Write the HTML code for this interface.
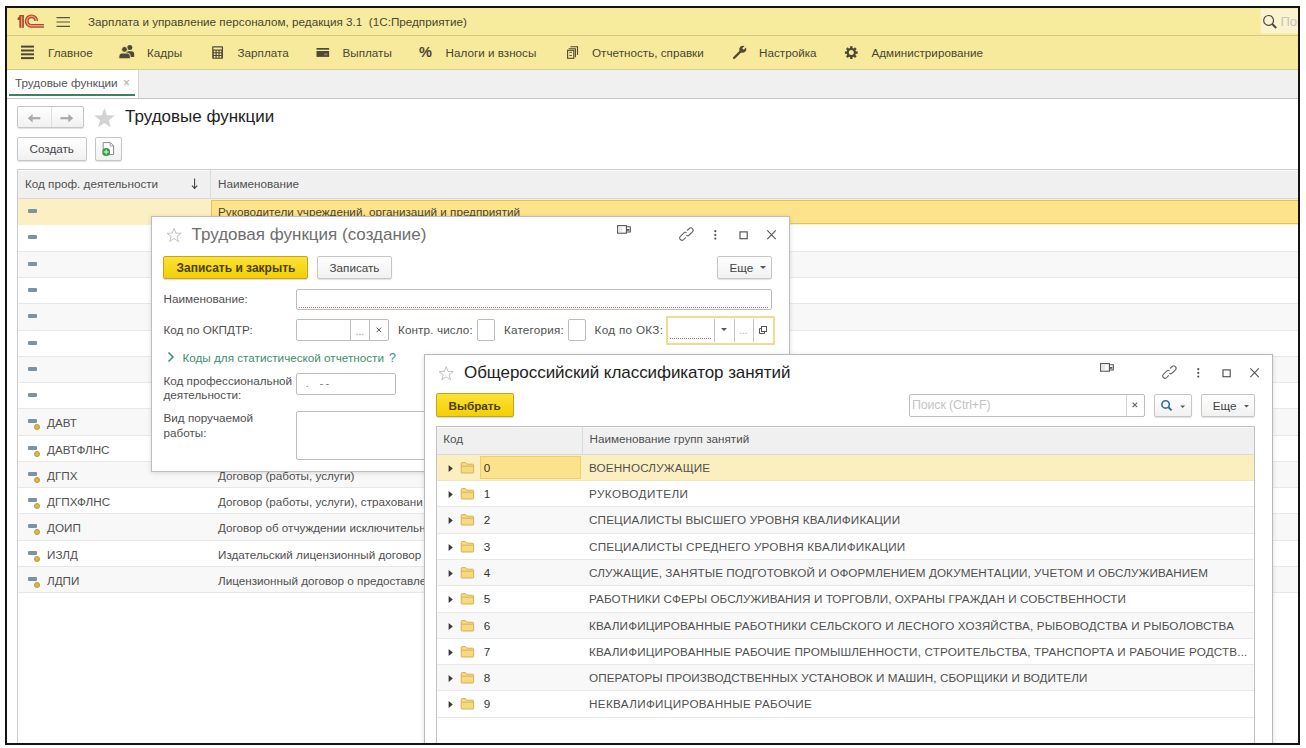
<!DOCTYPE html>
<html><head><meta charset="utf-8">
<style>
*{box-sizing:border-box;margin:0;padding:0}
html,body{width:1306px;height:748px;overflow:hidden;background:#fff}
body{position:relative;font-family:"Liberation Sans",sans-serif;font-size:11.7px;color:#505050}
.a{position:absolute}
.t{position:absolute;white-space:nowrap;line-height:14px}
#app{position:absolute;left:0;top:0;width:1306px;height:748px;clip-path:inset(8px 8px 5px 7px);background:#fff}
#frame{position:absolute;left:5px;top:6px;width:1295px;height:739px;border:2px solid #141414}
.ttl{color:#4a4536}
.btn{position:absolute;border:1px solid #c6c6c6;border-radius:2px;background:linear-gradient(#fff,#f1f1f1);box-shadow:0 1px 1px rgba(0,0,0,.12)}
.ybtn{position:absolute;border:1px solid #c4a51c;border-radius:2px;background:linear-gradient(#fbe236,#f3cf08);box-shadow:0 1px 1px rgba(0,0,0,.15)}
.inp{position:absolute;border:1px solid #bdbdbd;border-radius:2px;background:#fff}
.row{position:absolute;height:27px;border-bottom:1px solid #e4e4e4}
.g{background:#f6f6f6}
</style></head><body>
<div id="app">
  <!-- top title bar -->
  <div class="a" style="left:0;top:0;width:1306px;height:35px;background:#f7eb9d"></div>
  <div class="a" style="left:0;top:35px;width:1306px;height:1px;background:#d8c87e"></div>
  <div class="a" style="left:0;top:36px;width:1306px;height:33px;background:#f7ea9c"></div>
  <div class="a" style="left:0;top:68.5px;width:1306px;height:1px;background:#d9cb8c"></div>
  <!-- search top right -->
  <div class="a" style="left:1261px;top:9px;width:45px;height:24px;background:#fbf3d0;box-shadow:0 0 2px #fbf3d0"></div>

  <!-- logo -->
  <svg class="a" style="left:0;top:0" width="80" height="35" viewBox="0 0 80 35">
    <g fill="none" stroke-linecap="butt">
      <path d="M36.2 21.1 A4.75 4.75 0 1 0 31.4 25.85 L44 25.85" stroke="#ad4a2a" stroke-width="3.9"/>
      <path d="M36.2 21.1 A4.75 4.75 0 1 0 31.4 25.85 L44 25.85" stroke="#f09a78" stroke-width="1.5"/>
      <path d="M19.3 15 H23.9 V27.8 H19.3 V19.9 H17.6 V18.1 L19.3 16.6Z" fill="#ad4a2a" stroke="none"/>
      <path d="M21.6 27.8 V16.2" stroke="#f09a78" stroke-width="1.3"/>
    </g>
    <g stroke="#5b5440" stroke-width="1.2"><path d="M56.5 17.6H70M56.5 22H70M56.5 26.4H70"/></g>
  </svg>
  <div class="t ttl" style="left:88px;top:14.5px">Зарплата и управление персоналом, редакция 3.1&nbsp; (1С:Предприятие)</div>
  <svg class="a" style="left:1262px;top:14px" width="16" height="16" viewBox="0 0 16 16"><circle cx="6.6" cy="6.4" r="4.9" fill="none" stroke="#444" stroke-width="1.15"/><path d="M10.1 9.9 L14.2 14" stroke="#444" stroke-width="2"/></svg>
  <div class="t" style="left:1280.5px;top:13.5px;color:#c4c4c4;font-size:13px;line-height:15px">Пои</div>
  <!-- nav -->
  <svg class="a" style="left:0;top:36px" width="1000" height="33" viewBox="0 36 1000 33">
    <g fill="#4f4832">
      <rect x="21" y="45.6" width="13" height="2"/><rect x="21" y="49.5" width="13" height="2"/><rect x="21" y="53.3" width="13" height="2"/><rect x="21" y="57.1" width="13" height="2"/>
      <!-- people -->
      <circle cx="129.8" cy="47.4" r="2.5"/><path d="M126 57 V53.6 Q126 51.4 128.2 51.2 H131.6 Q134.2 51.4 134.2 54 V57 Z"/>
      <circle cx="124.5" cy="49.4" r="2.9" stroke="#f7ea9c" stroke-width="0.9"/><path d="M118.9 58.8 V56.2 Q118.9 53.3 121.6 53.1 H127.5 Q130.3 53.3 130.3 56.2 V58.8 Z" stroke="#f7ea9c" stroke-width="0.9"/>
      <!-- calculator -->
      <rect x="212.2" y="46.2" width="10.8" height="12.6" rx="0.8"/>
      <!-- card -->
      <rect x="316.5" y="48" width="12.6" height="1.7"/><rect x="316.5" y="51" width="12.6" height="5.9"/>
      <!-- wrench -->
      <path d="M733.4 56.9 L739.4 50.9 Q738.6 48.2 740.5 46.6 Q742.4 45.2 744.6 45.9 L742.2 48.3 L743.6 49.8 L746.1 47.4 Q746.8 49.6 745.4 51.4 Q743.6 53.2 741.1 52.5 L735.1 58.6 Q734.2 59.5 733.3 58.7 Q732.5 57.8 733.4 56.9Z"/>
    </g>
    <g fill="#f9eaa0">
      <rect x="213.4" y="47.5" width="8.4" height="2"/>
      <rect x="213.8" y="50.6" width="1.7" height="1.7"/><rect x="216.7" y="50.6" width="1.7" height="1.7"/><rect x="219.6" y="50.6" width="1.7" height="1.7"/>
      <rect x="213.8" y="53.3" width="1.7" height="1.7"/><rect x="216.7" y="53.3" width="1.7" height="1.7"/><rect x="219.6" y="53.3" width="1.7" height="1.7"/>
      <rect x="213.8" y="56" width="1.7" height="1.7"/><rect x="216.7" y="56" width="1.7" height="1.7"/><rect x="219.6" y="56" width="1.7" height="1.7"/>
      <rect x="324" y="53.5" width="3.5" height="1.8" fill="#8a8060"/>
    </g>
    <!-- reports -->
    <g fill="none" stroke="#4f4832" stroke-width="1.1">
      <rect x="567.6" y="50.3" width="6.2" height="8"/>
      <path d="M568.6 48.7 H575.4 V57.3 M570.4 46.8 H577.5 V55"/>
      <path d="M569.3 52.3 H572 M569.3 55.4 H572" stroke-width="0.9"/>
    </g>
    <!-- gear -->
    <g transform="translate(851.3 52.6)">
      <g fill="#4f4832">
        <circle r="4.7"/>
        <rect x="-1.2" y="-6.4" width="2.4" height="12.8"/>
        <rect x="-1.2" y="-6.4" width="2.4" height="12.8" transform="rotate(45)"/>
        <rect x="-1.2" y="-6.4" width="2.4" height="12.8" transform="rotate(90)"/>
        <rect x="-1.2" y="-6.4" width="2.4" height="12.8" transform="rotate(135)"/>
      </g>
      <circle r="2.5" fill="#f7ea9c"/>
    </g>
  </svg>
  <div class="t ttl" style="left:48px;top:46px">Главное</div>
  <div class="t ttl" style="left:147px;top:46px">Кадры</div>
  <div class="t ttl" style="left:237.5px;top:46px">Зарплата</div>
  <div class="t ttl" style="left:342.5px;top:46px">Выплаты</div>
  <div class="t ttl" style="left:419px;top:44px;font-weight:bold;font-size:14.5px;line-height:16px">%</div>
  <div class="t ttl" style="left:445.5px;top:46px">Налоги и взносы</div>
  <div class="t ttl" style="left:592px;top:46px">Отчетность, справки</div>
  <div class="t ttl" style="left:759px;top:46px">Настройка</div>
  <div class="t ttl" style="left:871.5px;top:46px">Администрирование</div>
  <!-- tabs strip -->
  <div class="a" style="left:0;top:69.5px;width:1306px;height:29.5px;background:#f0f0f0;border-bottom:1px solid #c4c4c4"></div>
  <div class="a" style="left:0;top:69.5px;width:138.5px;height:28.5px;background:#fff;border-right:1px solid #d4d4d4"></div>
  <div class="a" style="left:9px;top:94px;width:126px;height:2px;background:#3f7f62"></div>
  <div class="t" style="left:15px;top:76px;color:#555">Трудовые функции</div>
  <div class="t" style="left:123px;top:76px;color:#aaa;font-size:12px">×</div>

  <!-- page header -->
  <div class="btn" style="left:17px;top:106px;width:67px;height:22px"></div>
  <div class="a" style="left:50.5px;top:107px;width:1px;height:20px;background:#dedede"></div>
  <svg class="a" style="left:0;top:100px" width="130" height="30" viewBox="0 100 130 30">
    <g fill="none" stroke="#a9a9a9" stroke-width="2.2"><path d="M40.3 118.2 H30"/><path d="M60.4 118.2 H70.5"/></g>
    <g fill="#a9a9a9"><path d="M27.8 118.2 L32.6 114 V122.4Z"/><path d="M73.2 118.2 L68.4 114 V122.4Z"/></g>
    <path d="M104.4 108 L107 115.2 L114.8 115.4 L108.7 120.2 L110.9 127.2 L104.4 123 L97.9 127.2 L100.1 120.2 L94 115.4 L101.8 115.2Z" fill="#d3d3d3"/>
  </svg>
  <div class="t" style="left:125px;top:107px;font-size:17px;line-height:20px;color:#222">Трудовые функции</div>
  <div class="btn" style="left:17px;top:137px;width:69.5px;height:23.5px"></div>
  <div class="t" style="left:29.5px;top:141.5px;color:#444">Создать</div>
  <div class="btn" style="left:95px;top:137px;width:27px;height:23.5px"></div>
  <svg class="a" style="left:95px;top:137px" width="27" height="24" viewBox="95 137 27 24">
    <path d="M103.2 142.6 H110.4 L113.6 145.8 V154.6 H103.2Z" fill="#fff" stroke="#8a8a8a" stroke-width="1"/>
    <path d="M110.2 142.6 V146 H113.6" fill="none" stroke="#8a8a8a" stroke-width="0.8"/>
    <circle cx="106.2" cy="152" r="3.9" fill="#3b944c"/>
    <rect x="105.5" y="149.6" width="1.4" height="4.8" fill="#b8f0bc"/><rect x="103.8" y="151.3" width="4.8" height="1.4" fill="#b8f0bc"/>
  </svg>
  <!-- main table -->
  <div class="a" style="left:17px;top:169px;width:1290px;height:580px;border:1px solid #cccccc;background:#fff"></div>
  <div class="a" style="left:18px;top:170px;width:1290px;height:28px;background:#f0f0f0;border-top:1px solid #fafafa"></div>
  <div class="a" style="left:18px;top:198px;width:1290px;height:1px;background:#d8d8d8"></div>
  <div class="a" style="left:210px;top:170px;width:1px;height:28px;background:#dadada"></div>
  <div class="t" style="left:25px;top:176.6px">Код проф. деятельности</div>
  <svg class="a" style="left:189px;top:175.5px" width="12" height="14" viewBox="0 0 12 14"><path d="M5.6 2.4 V12.2" stroke="#444" stroke-width="1.1"/><path d="M3 9.6 L5.6 12.4 L8.2 9.6" fill="none" stroke="#444" stroke-width="1.1"/></svg>
  <div class="t" style="left:218px;top:176.6px">Наименование</div>
  <div class="a" style="left:18px;top:199px;width:1290px;height:26px;background:#fcefc4"></div>
  <div class="a" style="left:210.5px;top:200px;width:1090px;height:23.5px;background:#fce38c;border:1px solid #e0c55a"></div>
  <div class="t" style="left:218px;top:205px;color:#4a4536">Руководители учреждений, организаций и предприятий</div>
  <div class="a" style="left:28px;top:209.2px;width:9px;height:3.5px;background:#7d93a3;border-radius:1px"></div>
  <div class="a" style="left:18px;top:225px;width:1290px;height:26px;background:#fff"></div>
  <div class="a" style="left:18px;top:251px;width:1290px;height:1px;background:#e8e8e8"></div>
  <div class="a" style="left:28px;top:235.2px;width:9px;height:3.5px;background:#7d93a3;border-radius:1px"></div>
  <div class="a" style="left:18px;top:252px;width:1290px;height:25px;background:#f8f8f8"></div>
  <div class="a" style="left:18px;top:277px;width:1290px;height:1px;background:#e8e8e8"></div>
  <div class="a" style="left:28px;top:262.2px;width:9px;height:3.5px;background:#7d93a3;border-radius:1px"></div>
  <div class="a" style="left:18px;top:278px;width:1290px;height:25px;background:#fff"></div>
  <div class="a" style="left:18px;top:303px;width:1290px;height:1px;background:#e8e8e8"></div>
  <div class="a" style="left:28px;top:288.2px;width:9px;height:3.5px;background:#7d93a3;border-radius:1px"></div>
  <div class="a" style="left:18px;top:304px;width:1290px;height:26px;background:#f8f8f8"></div>
  <div class="a" style="left:18px;top:330px;width:1290px;height:1px;background:#e8e8e8"></div>
  <div class="a" style="left:28px;top:314.2px;width:9px;height:3.5px;background:#7d93a3;border-radius:1px"></div>
  <div class="a" style="left:18px;top:331px;width:1290px;height:25px;background:#fff"></div>
  <div class="a" style="left:18px;top:356px;width:1290px;height:1px;background:#e8e8e8"></div>
  <div class="a" style="left:28px;top:341.2px;width:9px;height:3.5px;background:#7d93a3;border-radius:1px"></div>
  <div class="a" style="left:18px;top:357px;width:1290px;height:25px;background:#f8f8f8"></div>
  <div class="a" style="left:18px;top:382px;width:1290px;height:1px;background:#e8e8e8"></div>
  <div class="a" style="left:28px;top:367.2px;width:9px;height:3.5px;background:#7d93a3;border-radius:1px"></div>
  <div class="a" style="left:18px;top:383px;width:1290px;height:25px;background:#fff"></div>
  <div class="a" style="left:18px;top:408px;width:1290px;height:1px;background:#e8e8e8"></div>
  <div class="a" style="left:28px;top:393.2px;width:9px;height:3.5px;background:#7d93a3;border-radius:1px"></div>
  <div class="a" style="left:18px;top:409px;width:1290px;height:26px;background:#f8f8f8"></div>
  <div class="a" style="left:18px;top:435px;width:1290px;height:1px;background:#e8e8e8"></div>
  <div class="a" style="left:27.7px;top:419.0px;width:9px;height:3.5px;background:#7d93a3;border-radius:1px"></div>
  <div class="a" style="left:34px;top:424.0px;width:6px;height:6px;background:#d8b94a;border-radius:50%;border:1px solid #b89a36"></div>
  <div class="t" style="left:47px;top:416px">ДАВТ</div>
  <div class="a" style="left:18px;top:436px;width:1290px;height:25px;background:#fff"></div>
  <div class="a" style="left:18px;top:461px;width:1290px;height:1px;background:#e8e8e8"></div>
  <div class="a" style="left:27.7px;top:446.0px;width:9px;height:3.5px;background:#7d93a3;border-radius:1px"></div>
  <div class="a" style="left:34px;top:451.0px;width:6px;height:6px;background:#d8b94a;border-radius:50%;border:1px solid #b89a36"></div>
  <div class="t" style="left:47px;top:443px">ДАВТФЛНС</div>
  <div class="a" style="left:18px;top:462px;width:1290px;height:25px;background:#f8f8f8"></div>
  <div class="a" style="left:18px;top:487px;width:1290px;height:1px;background:#e8e8e8"></div>
  <div class="a" style="left:27.7px;top:472.0px;width:9px;height:3.5px;background:#7d93a3;border-radius:1px"></div>
  <div class="a" style="left:34px;top:477.0px;width:6px;height:6px;background:#d8b94a;border-radius:50%;border:1px solid #b89a36"></div>
  <div class="t" style="left:47px;top:469px">ДГПХ</div>
  <div class="t" style="left:218px;top:469px">Договор (работы, услуги)</div>
  <div class="a" style="left:18px;top:488px;width:1290px;height:25px;background:#fff"></div>
  <div class="a" style="left:18px;top:513px;width:1290px;height:1px;background:#e8e8e8"></div>
  <div class="a" style="left:27.7px;top:498.0px;width:9px;height:3.5px;background:#7d93a3;border-radius:1px"></div>
  <div class="a" style="left:34px;top:503.0px;width:6px;height:6px;background:#d8b94a;border-radius:50%;border:1px solid #b89a36"></div>
  <div class="t" style="left:47px;top:495px">ДГПХФЛНС</div>
  <div class="t" style="left:218px;top:495px">Договор (работы, услуги), страховани</div>
  <div class="a" style="left:18px;top:514px;width:1290px;height:26px;background:#f8f8f8"></div>
  <div class="a" style="left:18px;top:540px;width:1290px;height:1px;background:#e8e8e8"></div>
  <div class="a" style="left:27.7px;top:524.0px;width:9px;height:3.5px;background:#7d93a3;border-radius:1px"></div>
  <div class="a" style="left:34px;top:529.0px;width:6px;height:6px;background:#d8b94a;border-radius:50%;border:1px solid #b89a36"></div>
  <div class="t" style="left:47px;top:521px">ДОИП</div>
  <div class="t" style="left:218px;top:521px">Договор об отчуждении исключительн</div>
  <div class="a" style="left:18px;top:541px;width:1290px;height:25px;background:#fff"></div>
  <div class="a" style="left:18px;top:566px;width:1290px;height:1px;background:#e8e8e8"></div>
  <div class="a" style="left:27.7px;top:551.0px;width:9px;height:3.5px;background:#7d93a3;border-radius:1px"></div>
  <div class="a" style="left:34px;top:556.0px;width:6px;height:6px;background:#d8b94a;border-radius:50%;border:1px solid #b89a36"></div>
  <div class="t" style="left:47px;top:548px">ИЗЛД</div>
  <div class="t" style="left:218px;top:548px">Издательский лицензионный договор о</div>
  <div class="a" style="left:18px;top:567px;width:1290px;height:25px;background:#f8f8f8"></div>
  <div class="a" style="left:18px;top:592px;width:1290px;height:1px;background:#e8e8e8"></div>
  <div class="a" style="left:27.7px;top:577.0px;width:9px;height:3.5px;background:#7d93a3;border-radius:1px"></div>
  <div class="a" style="left:34px;top:582.0px;width:6px;height:6px;background:#d8b94a;border-radius:50%;border:1px solid #b89a36"></div>
  <div class="t" style="left:47px;top:574px">ЛДПИ</div>
  <div class="t" style="left:218px;top:574px">Лицензионный договор о предоставле</div>

  <!-- dialog 1 -->
  <div class="a" style="left:151px;top:215.5px;width:639px;height:256px;background:#fff;border:1px solid #bdbdbd;box-shadow:0 1px 5px rgba(0,0,0,.13)"></div>
  <svg class="a" style="left:160px;top:220px" width="630" height="30" viewBox="160 220 630 30">
    <path d="M174.1 228.3 L175.9 233.1 L181.2 233.3 L177 236.5 L178.5 241.4 L174.1 238.6 L169.7 241.4 L171.2 236.5 L167 233.3 L172.3 233.1Z" fill="none" stroke="#c2c2c2" stroke-width="1"/>
    <g fill="none" stroke="#555" stroke-width="1.1">
      <rect x="617.6" y="225.6" width="8.8" height="7.6"/>
      <path d="M626.4 226.8 H630.3 V232 H626.4"/>
    </g>
    <rect x="626.8" y="229" width="2.6" height="1.8" fill="#555"/>
    <rect x="618.6" y="226.6" width="3.5" height="5.6" fill="#e6e6e6"/>
    <g fill="none" stroke="#666" stroke-width="1.1">
      <path d="M687.2 230.5 L689.2 228.5 Q690.8 227 692.4 228.6 Q694 230.2 692.4 231.8 L689.2 235 Q687.6 236.5 686.2 235.2"/>
      <path d="M685.8 237.4 L683.6 239.6 Q682 241.1 680.4 239.5 Q678.8 237.9 680.4 236.3 L683.6 233.1 Q685.2 231.6 686.6 232.9"/>
    </g>
    <g fill="#555"><circle cx="715.3" cy="231.2" r="1.1"/><circle cx="715.3" cy="234.9" r="1.1"/><circle cx="715.3" cy="238.6" r="1.1"/></g>
    <rect x="740" y="231.9" width="7.2" height="6.8" fill="none" stroke="#505050" stroke-width="1.15"/>
    <path d="M767.3 230.4 L775.8 239.1 M775.8 230.4 L767.3 239.1" stroke="#555" stroke-width="1.1"/>
  </svg>
  <div class="t" style="left:191.5px;top:224.5px;font-size:17px;line-height:20px;color:#6e6e6e">Трудовая функция (создание)</div>
  <div class="ybtn" style="left:163px;top:255.5px;width:145px;height:23.5px"></div>
  <div class="t" style="left:176.5px;top:260.5px;font-weight:bold;font-size:12px;color:#4b4000">Записать и закрыть</div>
  <div class="btn" style="left:316.5px;top:255.5px;width:75px;height:23.5px"></div>
  <div class="t" style="left:329.5px;top:260.5px;color:#444">Записать</div>
  <div class="btn" style="left:717px;top:255.5px;width:54.5px;height:23.5px"></div>
  <div class="t" style="left:729.5px;top:260.5px;color:#444">Еще</div>
  <svg class="a" style="left:759px;top:265px" width="8" height="5"><path d="M1 1 H7 L4 4Z" fill="#555"/></svg>
  <div class="t" style="left:163.5px;top:292.4px">Наименование:</div>
  <div class="inp" style="left:296px;top:288.5px;width:475.5px;height:21.5px"></div>
  <div class="a" style="left:299px;top:306.5px;width:470px;height:1px;background:repeating-linear-gradient(90deg,#c46a6a 0 1px,transparent 1px 2px)"></div>
  <div class="t" style="left:163.5px;top:323.2px">Код по ОКПДТР:</div>
  <div class="inp" style="left:296px;top:319.2px;width:92.5px;height:22px"></div>
  <div class="a" style="left:350px;top:320px;width:1px;height:20.5px;background:#bdbdbd"></div>
  <div class="a" style="left:369px;top:320px;width:1px;height:20.5px;background:#bdbdbd"></div>
  <div class="t" style="left:355.5px;top:324px;color:#999;font-size:10.5px">...</div>
  <svg class="a" style="left:375.5px;top:326.5px" width="6" height="6"><path d="M0.6 0.6 L5.2 5.2 M5.2 0.6 L0.6 5.2" stroke="#5a5a5a" stroke-width="1"/></svg>
  <div class="t" style="left:398px;top:323.2px;letter-spacing:0.12px">Контр. число:</div>
  <div class="inp" style="left:476.5px;top:319.2px;width:18.5px;height:22px"></div>
  <div class="t" style="left:504px;top:323.2px;letter-spacing:0.2px">Категория:</div>
  <div class="inp" style="left:567.5px;top:319.2px;width:18px;height:22px"></div>
  <div class="t" style="left:594.5px;top:323.2px;letter-spacing:0.32px">Код по ОКЗ:</div>
  <div class="a" style="left:665.5px;top:316px;width:109px;height:28.5px;border:2px solid #ebde8e;border-radius:1px;background:#fff"></div>
  <div class="a" style="left:670px;top:338px;width:41px;height:1px;background:repeating-linear-gradient(90deg,#c46a6a 0 1px,transparent 1px 2px)"></div>
  <div class="a" style="left:714px;top:319px;width:1px;height:22.5px;background:#c4c4c4"></div>
  <div class="a" style="left:733.5px;top:319px;width:1px;height:22.5px;background:#c4c4c4"></div>
  <div class="a" style="left:753px;top:319px;width:1px;height:22.5px;background:#c4c4c4"></div>
  <svg class="a" style="left:720px;top:327px" width="8" height="5"><path d="M1 1 H7 L4 4Z" fill="#555"/></svg>
  <div class="t" style="left:739px;top:324px;color:#b0b0b0;font-size:10px">...</div>
  <svg class="a" style="left:757px;top:324px" width="12" height="12" viewBox="0 0 12 12"><g fill="none" stroke="#555" stroke-width="1"><rect x="4.5" y="2.5" width="5" height="5"/><path d="M4.5 4.5 H2.5 V9.5 H7.5 V7.5"/></g></svg>
  <svg class="a" style="left:165px;top:350px" width="12" height="14"><path d="M3.5 2.5 L8 7 L3.5 11.5" fill="none" stroke="#3d9170" stroke-width="1.5"/></svg>
  <div class="t" style="left:182.5px;top:350.8px;color:#3f8f72">Коды для статистической отчетности</div>
  <div class="t" style="left:389px;top:350.8px;color:#3a8aa0;font-size:12.5px">?</div>
  <div class="t" style="left:163.5px;top:373.8px;line-height:14.5px">Код профессиональной<br>деятельности:</div>
  <div class="inp" style="left:296px;top:373.2px;width:99.5px;height:22px"></div>
  <div class="t" style="left:303px;top:377px;color:#777;font-size:10px">&nbsp;.&nbsp;&nbsp;&nbsp;&nbsp;- -</div>
  <div class="t" style="left:163.5px;top:411px;line-height:14.5px">Вид поручаемой<br>работы:</div>
  <div class="inp" style="left:296px;top:410.8px;width:600px;height:49px"></div>

  <!-- dialog 2 -->
  <div class="a" style="left:424px;top:353.5px;width:849px;height:420px;background:#fff;border:1px solid #b9b9b9;box-shadow:0 1px 5px rgba(0,0,0,.13)"></div>
  <svg class="a" style="left:430px;top:358px" width="40" height="30" viewBox="430 358 40 30">
    <path d="M446.2 366.5 L448 371.4 L453.4 371.6 L449.1 374.8 L450.6 379.8 L446.2 376.9 L441.8 379.8 L443.3 374.8 L439 371.6 L444.4 371.4Z" fill="none" stroke="#c2c2c2" stroke-width="1"/>
  </svg>
  <svg class="a" style="left:1090px;top:358px" width="180" height="30" viewBox="607 220 180 30">
    <g fill="none" stroke="#555" stroke-width="1.1">
      <rect x="617.6" y="225.6" width="8.8" height="7.6"/>
      <path d="M626.4 226.8 H630.3 V232 H626.4"/>
    </g>
    <rect x="626.8" y="229" width="2.6" height="1.8" fill="#555"/>
    <rect x="618.6" y="226.6" width="3.5" height="5.6" fill="#e6e6e6"/>
    <g fill="none" stroke="#666" stroke-width="1.1">
      <path d="M687.2 230.5 L689.2 228.5 Q690.8 227 692.4 228.6 Q694 230.2 692.4 231.8 L689.2 235 Q687.6 236.5 686.2 235.2"/>
      <path d="M685.8 237.4 L683.6 239.6 Q682 241.1 680.4 239.5 Q678.8 237.9 680.4 236.3 L683.6 233.1 Q685.2 231.6 686.6 232.9"/>
    </g>
    <g fill="#555"><circle cx="715.3" cy="231.2" r="1.1"/><circle cx="715.3" cy="234.9" r="1.1"/><circle cx="715.3" cy="238.6" r="1.1"/></g>
    <rect x="740" y="231.9" width="7.2" height="6.8" fill="none" stroke="#505050" stroke-width="1.15"/>
    <path d="M767.3 230.4 L775.8 239.1 M775.8 230.4 L767.3 239.1" stroke="#555" stroke-width="1.1"/>
  </svg>
  <div class="t" style="left:464px;top:363.1px;font-size:17px;line-height:20px;color:#222;letter-spacing:-0.06px">Общероссийский классификатор занятий</div>
  <div class="ybtn" style="left:435.5px;top:393px;width:78px;height:23.5px"></div>
  <div class="t" style="left:448.5px;top:398.5px;font-weight:bold;font-size:11.7px;color:#4b4000">Выбрать</div>
  <div class="inp" style="left:909px;top:394.3px;width:235.5px;height:22.3px"></div>
  <div class="a" style="left:1126px;top:395.3px;width:1px;height:20.5px;background:#d6d6d6"></div>
  <div class="t" style="left:912px;top:397.8px;color:#c4c4c4;font-size:12.4px;letter-spacing:-0.12px">Поиск (Ctrl+F)</div>
  <svg class="a" style="left:1132px;top:402px" width="6" height="6"><path d="M0.6 0.6 L5.2 5.2 M5.2 0.6 L0.6 5.2" stroke="#666" stroke-width="1.1"/></svg>
  <div class="btn" style="left:1154px;top:394px;width:37.6px;height:23px"></div>
  <svg class="a" style="left:1160px;top:399px" width="28" height="13" viewBox="0 0 28 13"><circle cx="5.6" cy="5.4" r="3.7" fill="none" stroke="#2f6f92" stroke-width="1.6"/><path d="M8.2 8 L11.6 11.4" stroke="#2f6f92" stroke-width="2"/><path d="M20.3 6.6 H25.1 L22.7 9Z" fill="#555"/></svg>
  <div class="btn" style="left:1200.7px;top:394px;width:54px;height:23px"></div>
  <div class="t" style="left:1212.7px;top:398.5px;color:#444">Еще</div>
  <svg class="a" style="left:1243px;top:404px" width="8" height="5"><path d="M1 1 H6 L3.5 3.5Z" fill="#555"/></svg>
  <!-- d2 table -->
  <div class="a" style="left:436px;top:426px;width:819px;height:330px;border:1px solid #c2c2c2;background:#fff"></div>
  <div class="a" style="left:437px;top:427px;width:817px;height:27px;background:#f0f0f0;border-top:1px solid #fafafa"></div>
  <div class="a" style="left:437px;top:454px;width:817px;height:1px;background:#d8d8d8"></div>
  <div class="a" style="left:582px;top:427px;width:1px;height:27px;background:#dadada"></div>
  <div class="t" style="left:443.3px;top:432px">Код</div>
  <div class="t" style="left:589.5px;top:432px">Наименование групп занятий</div>
  <div class="a" style="left:437px;top:455px;width:817px;height:25px;background:#fbefc0"></div>
  <div class="a" style="left:437px;top:480px;width:817px;height:1px;background:#efe6c8"></div>
  <div class="a" style="left:480.3px;top:456px;width:100.6px;height:23px;background:#fde28e;border:1px solid #efd067"></div>
  <svg class="a" style="left:440px;top:453.8px" width="40" height="27" viewBox="0 0 40 27"><path d="M8.6 10.9 L12.8 14.4 L8.6 17.9Z" fill="#3a3a3a"/><path d="M21.2 9.6 Q21.2 8.6 22.2 8.6 H25.2 Q26 8.6 26.6 9.6 L27 10.2 H32.6 Q33.6 10.2 33.6 11.2 V18.4 Q33.6 19 33 19 H21.8 Q21.2 19 21.2 18.4Z" fill="#f6da82" stroke="#d4b155" stroke-width="1"/><path d="M21.4 12.2 H33.4" stroke="#d4b155" stroke-width="0.9"/></svg>
  <div class="t" style="left:483.8px;top:460.7px;color:#333">0</div>
  <div class="t" style="left:589px;top:460.7px;letter-spacing:0.15px">ВОЕННОСЛУЖАЩИЕ</div>
  <div class="a" style="left:437px;top:481px;width:817px;height:25px;background:#fff"></div>
  <div class="a" style="left:437px;top:506px;width:817px;height:1px;background:#e8e8e8"></div>
  <svg class="a" style="left:440px;top:479.8px" width="40" height="27" viewBox="0 0 40 27"><path d="M8.6 10.9 L12.8 14.4 L8.6 17.9Z" fill="#3a3a3a"/><path d="M21.2 9.6 Q21.2 8.6 22.2 8.6 H25.2 Q26 8.6 26.6 9.6 L27 10.2 H32.6 Q33.6 10.2 33.6 11.2 V18.4 Q33.6 19 33 19 H21.8 Q21.2 19 21.2 18.4Z" fill="#f6da82" stroke="#d4b155" stroke-width="1"/><path d="M21.4 12.2 H33.4" stroke="#d4b155" stroke-width="0.9"/></svg>
  <div class="t" style="left:483.8px;top:486.7px;color:#333">1</div>
  <div class="t" style="left:589px;top:486.7px;letter-spacing:0.43px">РУКОВОДИТЕЛИ</div>
  <div class="a" style="left:437px;top:507px;width:817px;height:26px;background:#f8f8f8"></div>
  <div class="a" style="left:437px;top:533px;width:817px;height:1px;background:#e8e8e8"></div>
  <svg class="a" style="left:440px;top:505.8px" width="40" height="27" viewBox="0 0 40 27"><path d="M8.6 10.9 L12.8 14.4 L8.6 17.9Z" fill="#3a3a3a"/><path d="M21.2 9.6 Q21.2 8.6 22.2 8.6 H25.2 Q26 8.6 26.6 9.6 L27 10.2 H32.6 Q33.6 10.2 33.6 11.2 V18.4 Q33.6 19 33 19 H21.8 Q21.2 19 21.2 18.4Z" fill="#f6da82" stroke="#d4b155" stroke-width="1"/><path d="M21.4 12.2 H33.4" stroke="#d4b155" stroke-width="0.9"/></svg>
  <div class="t" style="left:483.8px;top:512.7px;color:#333">2</div>
  <div class="t" style="left:589px;top:512.7px;letter-spacing:0.15px">СПЕЦИАЛИСТЫ ВЫСШЕГО УРОВНЯ КВАЛИФИКАЦИИ</div>
  <div class="a" style="left:437px;top:534px;width:817px;height:25px;background:#fff"></div>
  <div class="a" style="left:437px;top:559px;width:817px;height:1px;background:#e8e8e8"></div>
  <svg class="a" style="left:440px;top:532.8px" width="40" height="27" viewBox="0 0 40 27"><path d="M8.6 10.9 L12.8 14.4 L8.6 17.9Z" fill="#3a3a3a"/><path d="M21.2 9.6 Q21.2 8.6 22.2 8.6 H25.2 Q26 8.6 26.6 9.6 L27 10.2 H32.6 Q33.6 10.2 33.6 11.2 V18.4 Q33.6 19 33 19 H21.8 Q21.2 19 21.2 18.4Z" fill="#f6da82" stroke="#d4b155" stroke-width="1"/><path d="M21.4 12.2 H33.4" stroke="#d4b155" stroke-width="0.9"/></svg>
  <div class="t" style="left:483.8px;top:539.7px;color:#333">3</div>
  <div class="t" style="left:589px;top:539.7px;letter-spacing:0.2px">СПЕЦИАЛИСТЫ СРЕДНЕГО УРОВНЯ КВАЛИФИКАЦИИ</div>
  <div class="a" style="left:437px;top:560px;width:817px;height:25px;background:#f8f8f8"></div>
  <div class="a" style="left:437px;top:585px;width:817px;height:1px;background:#e8e8e8"></div>
  <svg class="a" style="left:440px;top:558.8px" width="40" height="27" viewBox="0 0 40 27"><path d="M8.6 10.9 L12.8 14.4 L8.6 17.9Z" fill="#3a3a3a"/><path d="M21.2 9.6 Q21.2 8.6 22.2 8.6 H25.2 Q26 8.6 26.6 9.6 L27 10.2 H32.6 Q33.6 10.2 33.6 11.2 V18.4 Q33.6 19 33 19 H21.8 Q21.2 19 21.2 18.4Z" fill="#f6da82" stroke="#d4b155" stroke-width="1"/><path d="M21.4 12.2 H33.4" stroke="#d4b155" stroke-width="0.9"/></svg>
  <div class="t" style="left:483.8px;top:565.7px;color:#333">4</div>
  <div class="t" style="left:589px;top:565.7px;letter-spacing:0.096px">СЛУЖАЩИЕ, ЗАНЯТЫЕ ПОДГОТОВКОЙ И ОФОРМЛЕНИЕМ ДОКУМЕНТАЦИИ, УЧЕТОМ И ОБСЛУЖИВАНИЕМ</div>
  <div class="a" style="left:437px;top:586px;width:817px;height:26px;background:#fff"></div>
  <div class="a" style="left:437px;top:612px;width:817px;height:1px;background:#e8e8e8"></div>
  <svg class="a" style="left:440px;top:584.8px" width="40" height="27" viewBox="0 0 40 27"><path d="M8.6 10.9 L12.8 14.4 L8.6 17.9Z" fill="#3a3a3a"/><path d="M21.2 9.6 Q21.2 8.6 22.2 8.6 H25.2 Q26 8.6 26.6 9.6 L27 10.2 H32.6 Q33.6 10.2 33.6 11.2 V18.4 Q33.6 19 33 19 H21.8 Q21.2 19 21.2 18.4Z" fill="#f6da82" stroke="#d4b155" stroke-width="1"/><path d="M21.4 12.2 H33.4" stroke="#d4b155" stroke-width="0.9"/></svg>
  <div class="t" style="left:483.8px;top:591.7px;color:#333">5</div>
  <div class="t" style="left:589px;top:591.7px;letter-spacing:0.062px">РАБОТНИКИ СФЕРЫ ОБСЛУЖИВАНИЯ И ТОРГОВЛИ, ОХРАНЫ ГРАЖДАН И СОБСТВЕННОСТИ</div>
  <div class="a" style="left:437px;top:613px;width:817px;height:25px;background:#f8f8f8"></div>
  <div class="a" style="left:437px;top:638px;width:817px;height:1px;background:#e8e8e8"></div>
  <svg class="a" style="left:440px;top:611.8px" width="40" height="27" viewBox="0 0 40 27"><path d="M8.6 10.9 L12.8 14.4 L8.6 17.9Z" fill="#3a3a3a"/><path d="M21.2 9.6 Q21.2 8.6 22.2 8.6 H25.2 Q26 8.6 26.6 9.6 L27 10.2 H32.6 Q33.6 10.2 33.6 11.2 V18.4 Q33.6 19 33 19 H21.8 Q21.2 19 21.2 18.4Z" fill="#f6da82" stroke="#d4b155" stroke-width="1"/><path d="M21.4 12.2 H33.4" stroke="#d4b155" stroke-width="0.9"/></svg>
  <div class="t" style="left:483.8px;top:618.7px;color:#333">6</div>
  <div class="t" style="left:589px;top:618.7px;letter-spacing:0.158px">КВАЛИФИЦИРОВАННЫЕ РАБОТНИКИ СЕЛЬСКОГО И ЛЕСНОГО ХОЗЯЙСТВА, РЫБОВОДСТВА И РЫБОЛОВСТВА</div>
  <div class="a" style="left:437px;top:639px;width:817px;height:25px;background:#fff"></div>
  <div class="a" style="left:437px;top:664px;width:817px;height:1px;background:#e8e8e8"></div>
  <svg class="a" style="left:440px;top:637.8px" width="40" height="27" viewBox="0 0 40 27"><path d="M8.6 10.9 L12.8 14.4 L8.6 17.9Z" fill="#3a3a3a"/><path d="M21.2 9.6 Q21.2 8.6 22.2 8.6 H25.2 Q26 8.6 26.6 9.6 L27 10.2 H32.6 Q33.6 10.2 33.6 11.2 V18.4 Q33.6 19 33 19 H21.8 Q21.2 19 21.2 18.4Z" fill="#f6da82" stroke="#d4b155" stroke-width="1"/><path d="M21.4 12.2 H33.4" stroke="#d4b155" stroke-width="0.9"/></svg>
  <div class="t" style="left:483.8px;top:644.7px;color:#333">7</div>
  <div class="t" style="left:589px;top:644.7px;letter-spacing:0.165px">КВАЛИФИЦИРОВАННЫЕ РАБОЧИЕ ПРОМЫШЛЕННОСТИ, СТРОИТЕЛЬСТВА, ТРАНСПОРТА И РАБОЧИЕ РОДСТВ...</div>
  <div class="a" style="left:437px;top:665px;width:817px;height:25px;background:#f8f8f8"></div>
  <div class="a" style="left:437px;top:690px;width:817px;height:1px;background:#e8e8e8"></div>
  <svg class="a" style="left:440px;top:663.8px" width="40" height="27" viewBox="0 0 40 27"><path d="M8.6 10.9 L12.8 14.4 L8.6 17.9Z" fill="#3a3a3a"/><path d="M21.2 9.6 Q21.2 8.6 22.2 8.6 H25.2 Q26 8.6 26.6 9.6 L27 10.2 H32.6 Q33.6 10.2 33.6 11.2 V18.4 Q33.6 19 33 19 H21.8 Q21.2 19 21.2 18.4Z" fill="#f6da82" stroke="#d4b155" stroke-width="1"/><path d="M21.4 12.2 H33.4" stroke="#d4b155" stroke-width="0.9"/></svg>
  <div class="t" style="left:483.8px;top:670.7px;color:#333">8</div>
  <div class="t" style="left:589px;top:670.7px;letter-spacing:0.08px">ОПЕРАТОРЫ ПРОИЗВОДСТВЕННЫХ УСТАНОВОК И МАШИН, СБОРЩИКИ И ВОДИТЕЛИ</div>
  <div class="a" style="left:437px;top:691px;width:817px;height:26px;background:#fff"></div>
  <div class="a" style="left:437px;top:717px;width:817px;height:1px;background:#e8e8e8"></div>
  <svg class="a" style="left:440px;top:689.8px" width="40" height="27" viewBox="0 0 40 27"><path d="M8.6 10.9 L12.8 14.4 L8.6 17.9Z" fill="#3a3a3a"/><path d="M21.2 9.6 Q21.2 8.6 22.2 8.6 H25.2 Q26 8.6 26.6 9.6 L27 10.2 H32.6 Q33.6 10.2 33.6 11.2 V18.4 Q33.6 19 33 19 H21.8 Q21.2 19 21.2 18.4Z" fill="#f6da82" stroke="#d4b155" stroke-width="1"/><path d="M21.4 12.2 H33.4" stroke="#d4b155" stroke-width="0.9"/></svg>
  <div class="t" style="left:483.8px;top:696.7px;color:#333">9</div>
  <div class="t" style="left:589px;top:696.7px;letter-spacing:0.33px">НЕКВАЛИФИЦИРОВАННЫЕ РАБОЧИЕ</div>
</div>
<div id="frame"></div>
</body></html>
